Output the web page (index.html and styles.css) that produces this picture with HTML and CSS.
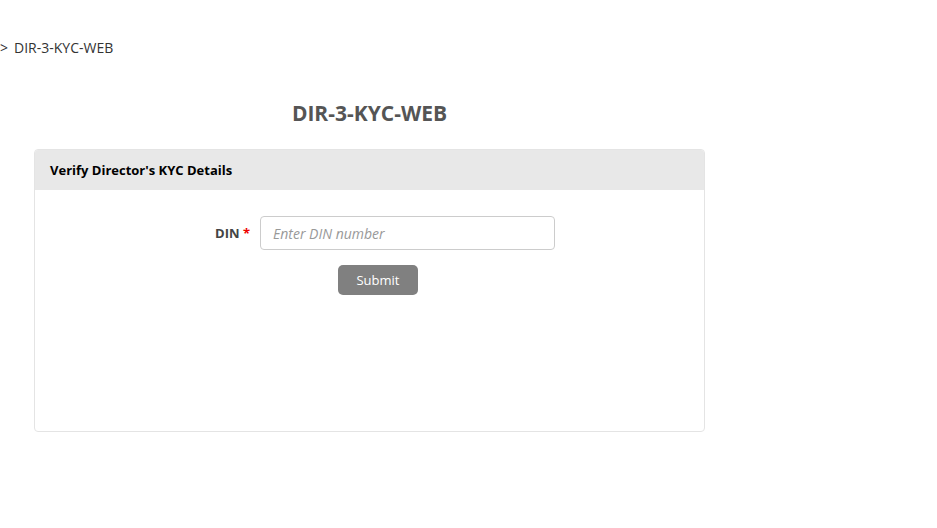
FILE: index.html
```html
<!doctype html>
<html lang="en">
<head>
    <meta charset="UTF-8">
    <meta name="viewport" content="width=device-width, initial-scale=1.0">
    <title>DIR-3-KYC-WEB</title>
    <link rel="stylesheet" href="styles.css">
</head>
<body>
    <div class="breadcrumb">
        <span class="sep">&gt;</span>
        <a href="#">DIR-3-KYC-WEB</a>
    </div>

    <div class="page">
        <h1 class="page-title">DIR-3-KYC-WEB</h1>

        <div class="card">
            <div class="card-header">Verify Director's KYC Details</div>
            <div class="card-body">
                <form class="kyc-form">
                    <div class="form-row">
                        <label for="din">DIN <span class="req">*</span></label>
                        <input type="text" id="din" placeholder="Enter DIN number">
                    </div>
                    <div class="form-actions">
                        <button type="button" class="btn-submit">Submit</button>
                    </div>
                </form>
            </div>
        </div>
    </div>
</body>
</html>
```

FILE: styles.css
```css
body {
    margin: 0;
    font-family: "Open Sans", "Noto Sans", sans-serif;
    background-color: #ffffff;
    color: #333;
}

.breadcrumb {
    padding-top: 38px;
    font-size: 14px;
    line-height: 20px;
    display: flex;
    gap: 6px;
}

.breadcrumb .sep {
    color: #333;
}

.breadcrumb a {
    color: #333;
    text-decoration: none;
}

.page {
    width: 671px;
    margin-left: 34px;
    padding-top: 40px;
}

.page-title {
    margin: 0 0 21px 0;
    text-align: center;
    font-size: 21px;
    line-height: 30px;
    color: #555;
}

.card {
    border: 1px solid #e4e4e4;
    border-radius: 4px;
    height: 283px;
    box-sizing: border-box;
    overflow: hidden;
}

.card-header {
    background-color: #e8e8e8;
    height: 40px;
    padding-left: 15px;
    font-size: 13px;
    font-weight: bold;
    color: #000;
    display: flex;
    align-items: center;
}

.card-body {
    padding-top: 26px;
}

.form-row {
    display: flex;
    align-items: center;
    gap: 10px;
}

.form-row label {
    width: 215px;
    text-align: right;
    font-size: 13px;
    font-weight: bold;
    color: #444;
}

.req {
    color: #e00;
}

.form-row input {
    width: 295px;
    height: 34px;
    box-sizing: border-box;
    border: 1px solid #ccc;
    border-radius: 4px;
    padding: 0 12px;
    font-family: inherit;
    font-size: 14px;
}

.form-row input::placeholder {
    color: #999;
    font-style: italic;
}

.form-actions {
    margin-top: 15px;
    padding-left: 303px;
}

.btn-submit {
    width: 80px;
    height: 30px;
    background-color: #808080;
    color: white;
    border: none;
    border-radius: 5px;
    font-family: inherit;
    font-size: 13px;
}
```
